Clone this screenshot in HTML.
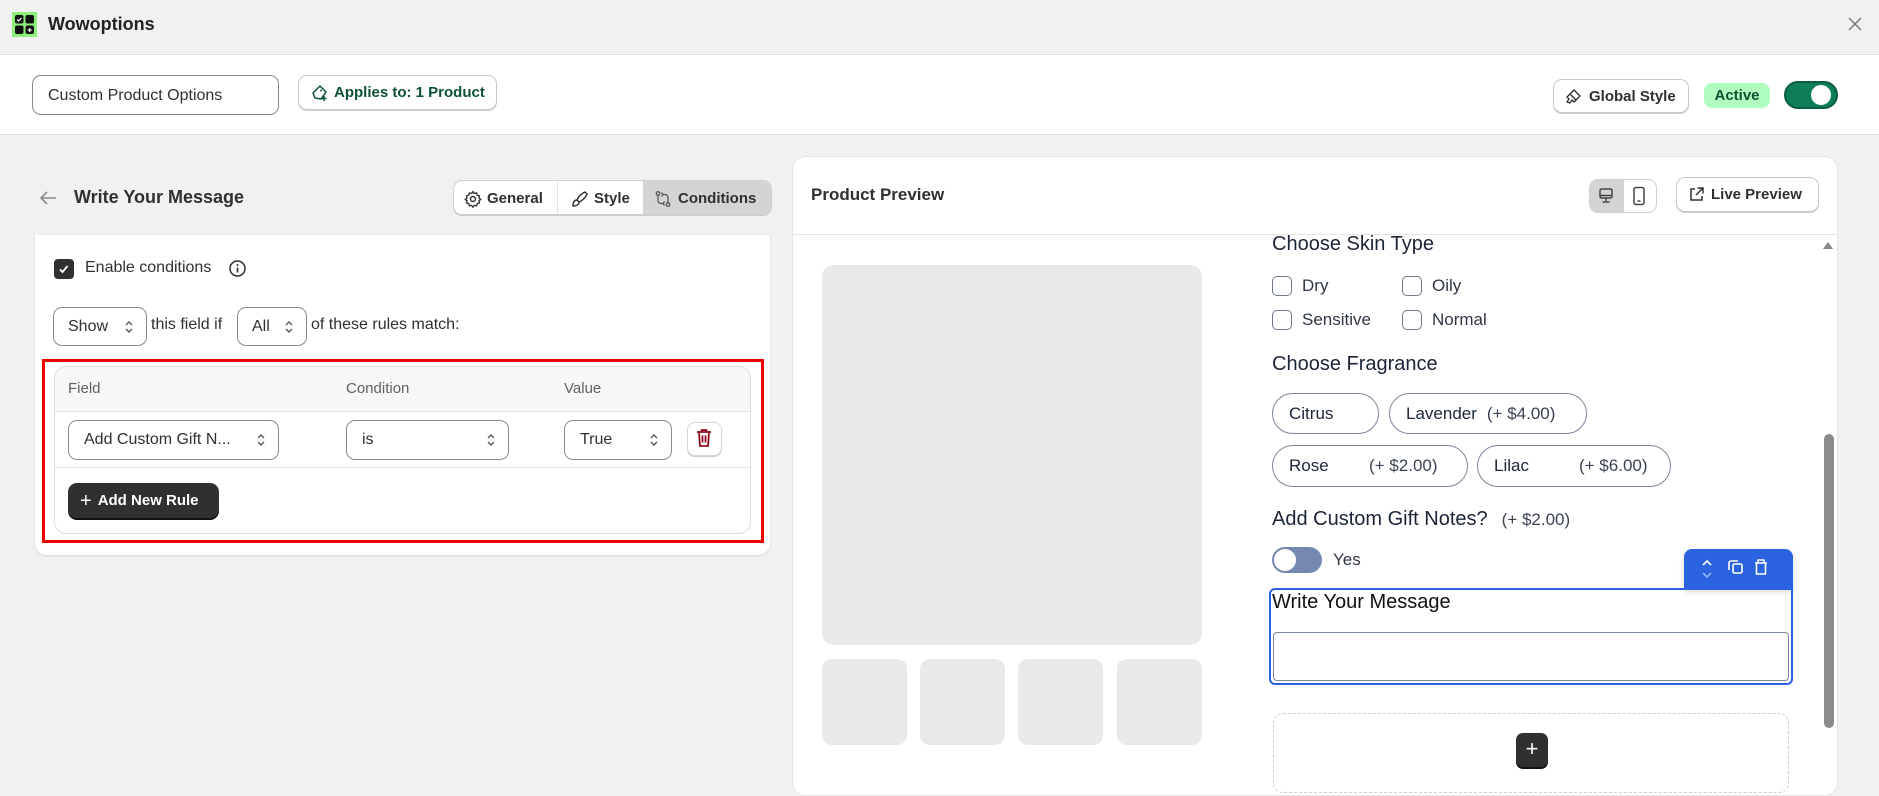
<!DOCTYPE html>
<html><head><meta charset="utf-8">
<style>
*{box-sizing:border-box;margin:0;padding:0}
body{width:1879px;height:777px;overflow:hidden;background:#f1f1f1;font-family:"Liberation Sans",sans-serif;color:#303030;position:relative}
.a{position:absolute}
.btn{position:absolute;background:#fff;border:1px solid #c9c9c9;border-radius:9px;box-shadow:0 1px 0 #d0d0d0;display:flex;align-items:center;font-size:15px}
.sel{position:absolute;background:#fff;border:1px solid #8a8a8a;border-radius:9px;display:flex;align-items:center;font-size:16px;color:#303030;padding-left:14px}
.chev{position:absolute;right:12px;top:50%;transform:translateY(-50%)}
.pill{position:absolute;border:1px solid #7b879b;border-radius:21px;display:flex;align-items:center;font-size:17px;color:#1b2537;padding-left:16px}
.cb{position:absolute;width:20px;height:20px;border:1.5px solid #6e7a8c;border-radius:5px;background:#fff}
.lbl{position:absolute;font-size:17px;color:#303744}
.thumb{position:absolute;top:659px;width:85px;height:86px;background:#e8e9eb;border-radius:10px}
</style></head><body>
<!-- top bar -->
<div class="a" style="left:12px;top:12px;width:25px;height:25px;background:#8ef07a"></div>
<svg class="a" style="left:15px;top:15px" width="19" height="19" viewBox="0 0 19 19"><rect x="0" y="0" width="8.5" height="8.5" rx="2" fill="#111"/><rect x="10.5" y="0" width="8.5" height="8.5" rx="2" fill="#111"/><rect x="0" y="10.5" width="8.5" height="8.5" rx="2" fill="#111"/><rect x="10.5" y="10.5" width="8.5" height="8.5" rx="2" fill="#111"/><path d="M2 4.5l1.5 1.5 3-3" stroke="#fff" stroke-width="1.2" fill="none"/><path d="M14.7 13v4M12.7 15h4" stroke="#fff" stroke-width="1.2"/></svg>
<div class="a" style="left:48px;top:14px;font-size:18px;font-weight:bold;color:#222">Wowoptions</div>
<svg class="a" style="left:1847px;top:16px" width="16" height="16" viewBox="0 0 16 16"><path d="M2 2l12 12M14 2L2 14" stroke="#777" stroke-width="1.5"/></svg>
<!-- header -->
<div class="a" style="left:0;top:54px;width:1879px;height:81px;background:#fff;border-top:1px solid #e0e0e0;border-bottom:1px solid #dadada"></div>
<div class="a" style="left:32px;top:75px;width:247px;height:40px;border:1px solid #8a8a8a;border-radius:9px;background:#fff;font-size:16px;padding:11px 0 0 15px;color:#303030">Custom Product Options</div>
<div class="btn" style="left:298px;top:75px;width:199px;height:35px;color:#0c5132;font-weight:bold;font-size:15px;padding-left:12px">
<svg width="18" height="18" viewBox="0 0 18 18" style="margin-right:5px"><path d="M9 2l6 6-5 7-6-1-2-5z" fill="none" stroke="#0c5132" stroke-width="1.5" stroke-linejoin="round"/><circle cx="10" cy="6.5" r="1" fill="#0c5132"/><path d="M13 12v5M10.5 14.5h5" stroke="#0c5132" stroke-width="1.5"/></svg>Applies to: 1 Product</div>
<div class="btn" style="left:1553px;top:79px;width:136px;height:34px;padding-left:11px;font-weight:bold;color:#303030">
<svg width="18" height="18" viewBox="0 0 18 18" style="margin-right:6px"><path d="M9 3l6 6-4 4-6-6z M5 7l-3 3 2 2-2 3 3 1 2-3 2 2 3-3" fill="none" stroke="#303030" stroke-width="1.4" stroke-linejoin="round"/></svg>Global Style</div>
<div class="a" style="left:1704px;top:83px;width:66px;height:25px;background:#affebf;border-radius:8px;color:#0c5132;font-size:15px;font-weight:bold;text-align:center;line-height:25px">Active</div>
<div class="a" style="left:1784px;top:81px;width:54px;height:28px;background:#0d7d5a;border-radius:14px;border:2px solid #0a5c42"></div>
<div class="a" style="left:1811px;top:85px;width:20px;height:20px;background:#fff;border-radius:50%"></div>
<!-- left title -->
<svg class="a" style="left:38px;top:190px" width="20" height="16" viewBox="0 0 20 16"><path d="M18 8H3M9 2L3 8l6 6" stroke="#8a8a8a" stroke-width="1.6" fill="none"/></svg>
<div class="a" style="left:74px;top:187px;font-size:18px;font-weight:bold;color:#303030">Write Your Message</div>
<div class="a" style="left:453px;top:180px;width:319px;height:35px;background:#fff;border:1px solid #cfcfcf;border-radius:9px;box-shadow:0 1px 0 #ccc;overflow:hidden;font-size:15px;font-weight:bold">
 <div class="a" style="left:0;top:0;width:104px;height:35px;border-right:1px solid #e3e3e3;display:flex;align-items:center;padding-left:10px">
  <svg width="18" height="18" viewBox="0 0 18 18" style="margin-right:5px"><circle cx="9" cy="9" r="2.5" fill="none" stroke="#303030" stroke-width="1.4"/><path d="M9 1.5l1.3 2 2.3-.6.6 2.3 2.3.6-.6 2.3 2 1.3-2 1.3.6 2.3-2.3.6-.6 2.3-2.3-.6-1.3 2-1.3-2-2.3.6-.6-2.3-2.3-.6.6-2.3-2-1.3 2-1.3-.6-2.3 2.3-.6.6-2.3 2.3.6z" fill="none" stroke="#303030" stroke-width="1.3" stroke-linejoin="round"/></svg>General</div>
 <div class="a" style="left:104px;top:0;width:85px;height:35px;display:flex;align-items:center;padding-left:12px">
  <svg width="18" height="18" viewBox="0 0 18 18" style="margin-right:6px"><path d="M15 2c-3 1-7 5-8 8l2 2c3-1 7-5 8-8z M7 10c-2 0-4 1-4 6 3 0 6-1 6-4" fill="none" stroke="#303030" stroke-width="1.4" stroke-linejoin="round"/></svg>Style</div>
 <div class="a" style="left:189px;top:0;width:130px;height:35px;background:#d4d4d4;display:flex;align-items:center;padding-left:11px">
  <svg width="18" height="18" viewBox="0 0 18 18" style="margin-right:6px"><circle cx="4" cy="3.5" r="1.8" fill="none" stroke="#555" stroke-width="1.3"/><circle cx="14" cy="14.5" r="1.8" fill="none" stroke="#555" stroke-width="1.3"/><path d="M4 5.5v5a3 3 0 003 3h2M14 12.5v-5a3 3 0 00-3-3H9M10.5 11.5l-1.5 2 1.5 2M7.5 2.5l1.5 2-1.5 2" fill="none" stroke="#555" stroke-width="1.3"/></svg>Conditions</div>
</div>
<!-- left card -->
<div class="a" style="left:35px;top:235px;width:735px;height:320px;background:#fff;border-radius:0 0 12px 12px;box-shadow:0 1px 2px #d6d6d6"></div>
<div class="a" style="left:54px;top:259px;width:20px;height:20px;background:#303030;border-radius:4px"></div>
<svg class="a" style="left:57px;top:262px" width="14" height="14" viewBox="0 0 14 14"><path d="M3 7.5l2.5 2.5 5-6" stroke="#fff" stroke-width="1.8" fill="none"/></svg>
<div class="a" style="left:85px;top:259px;font-size:16px;color:#303030">Enable conditions</div>
<svg class="a" style="left:228px;top:259px" width="19" height="19" viewBox="0 0 19 19"><circle cx="9.5" cy="9.5" r="7.5" fill="none" stroke="#303030" stroke-width="1.5"/><path d="M9.5 8.5v5" stroke="#303030" stroke-width="1.6"/><circle cx="9.5" cy="6" r="1" fill="#303030"/></svg>
<div class="sel" style="left:53px;top:307px;width:94px;height:39px">Show<svg class="chev" width="10" height="16" viewBox="0 0 10 16"><path d="M2 6l3-3 3 3M2 10l3 3 3-3" stroke="#555" stroke-width="1.4" fill="none"/></svg></div>
<div class="a" style="left:151px;top:316px;font-size:16px">this field if</div>
<div class="sel" style="left:237px;top:307px;width:70px;height:39px">All<svg class="chev" width="10" height="16" viewBox="0 0 10 16"><path d="M2 6l3-3 3 3M2 10l3 3 3-3" stroke="#555" stroke-width="1.4" fill="none"/></svg></div>
<div class="a" style="left:311px;top:316px;font-size:16px">of these rules match:</div>
<!-- red box -->
<div class="a" style="left:42px;top:359px;width:722px;height:184px;border:3px solid #ee0000"></div>
<div class="a" style="left:54px;top:366px;width:697px;height:168px;border:1px solid #dcdcdc;border-radius:12px;overflow:hidden;background:#fff">
 <div class="a" style="left:0;top:0;width:697px;height:45px;background:#f7f7f7;border-bottom:1px solid #e3e3e3"></div>
 <div class="a" style="left:0;top:100px;width:697px;height:1px;background:#e3e3e3"></div>
</div>
<div class="a" style="left:68px;top:380px;font-size:15px;color:#616161">Field</div>
<div class="a" style="left:346px;top:380px;font-size:15px;color:#616161">Condition</div>
<div class="a" style="left:564px;top:380px;font-size:15px;color:#616161">Value</div>
<div class="sel" style="left:68px;top:420px;width:211px;height:40px;padding-left:15px">Add Custom Gift N...<svg class="chev" width="10" height="16" viewBox="0 0 10 16"><path d="M2 6l3-3 3 3M2 10l3 3 3-3" stroke="#555" stroke-width="1.4" fill="none"/></svg></div>
<div class="sel" style="left:346px;top:420px;width:163px;height:40px;padding-left:15px">is<svg class="chev" width="10" height="16" viewBox="0 0 10 16"><path d="M2 6l3-3 3 3M2 10l3 3 3-3" stroke="#555" stroke-width="1.4" fill="none"/></svg></div>
<div class="sel" style="left:564px;top:420px;width:108px;height:40px;padding-left:15px">True<svg class="chev" width="10" height="16" viewBox="0 0 10 16"><path d="M2 6l3-3 3 3M2 10l3 3 3-3" stroke="#555" stroke-width="1.4" fill="none"/></svg></div>
<div class="a" style="left:687px;top:422px;width:35px;height:34px;border:1px solid #d6d6d6;border-radius:8px;box-shadow:0 1px 0 #ccc;background:#fff"></div>
<svg class="a" style="left:695px;top:428px" width="18" height="20" viewBox="0 0 18 20"><path d="M2 4h14M6.5 4V2h5v2M4 4l1 14h8l1-14M7.5 7.5v7M10.5 7.5v7" fill="none" stroke="#8e0b21" stroke-width="1.8" stroke-linejoin="round"/></svg>
<div class="a" style="left:68px;top:483px;width:151px;height:35px;background:#303030;border-radius:9px;box-shadow:0 2px 0 #111;color:#fff;font-size:15px;font-weight:bold;display:flex;align-items:center;padding-left:12px"><span style="font-size:20px;font-weight:normal;margin-right:6px;line-height:1">+</span>Add New Rule</div>
<!-- right card -->
<div class="a" style="left:792px;top:156px;width:1046px;height:640px;background:#fff;border-radius:14px;border:1px solid #e6e6e6"></div>
<div class="a" style="left:792px;top:234px;width:1046px;height:1px;background:#e6e6e6"></div>
<div class="a" style="left:811px;top:185px;font-size:17px;font-weight:bold;color:#303030">Product Preview</div>
<div class="a" style="left:1589px;top:179px;width:68px;height:34px;border:1px solid #cfcfcf;border-radius:9px;overflow:hidden;background:#fff">
 <div class="a" style="left:0;top:0;width:34px;height:34px;background:#d4d4d4"></div>
</div>
<svg class="a" style="left:1598px;top:187px" width="16" height="18" viewBox="0 0 16 18"><rect x="2" y="2" width="12" height="9" rx="1.5" fill="none" stroke="#444" stroke-width="1.5"/><path d="M2 8.5h12M8 11v3M4.5 15h7" stroke="#444" stroke-width="1.5"/></svg>
<svg class="a" style="left:1632px;top:186px" width="14" height="20" viewBox="0 0 14 20"><rect x="2" y="1.5" width="10" height="17" rx="2" fill="none" stroke="#444" stroke-width="1.5"/><path d="M5.5 15h3" stroke="#444" stroke-width="1.5"/></svg>
<div class="btn" style="left:1676px;top:177px;width:143px;height:35px;font-weight:bold;padding-left:11px;color:#303030"><svg width="17" height="17" viewBox="0 0 17 17" style="margin-right:6px"><path d="M7 3H3v11h11v-4M9.5 2h5.5v5.5M15 2L8 9" fill="none" stroke="#303030" stroke-width="1.5"/></svg>Live Preview</div>
<!-- images -->
<div class="a" style="left:822px;top:265px;width:380px;height:380px;background:#e8e9eb;border-radius:12px"></div>
<div class="thumb" style="left:822px"></div><div class="thumb" style="left:920px"></div><div class="thumb" style="left:1018px"></div><div class="thumb" style="left:1117px"></div>
<!-- form -->
<div class="a" style="left:1272px;top:233px;font-size:20px;color:#1b2537">Choose Skin Type</div>
<div class="cb" style="left:1272px;top:276px"></div><div class="lbl" style="left:1302px;top:276px">Dry</div>
<div class="cb" style="left:1402px;top:276px"></div><div class="lbl" style="left:1432px;top:276px">Oily</div>
<div class="cb" style="left:1272px;top:310px"></div><div class="lbl" style="left:1302px;top:310px">Sensitive</div>
<div class="cb" style="left:1402px;top:310px"></div><div class="lbl" style="left:1432px;top:310px">Normal</div>
<div class="a" style="left:1272px;top:353px;font-size:20px;color:#1b2537">Choose Fragrance</div>
<div class="pill" style="left:1272px;top:393px;width:107px;height:41px">Citrus</div>
<div class="pill" style="left:1389px;top:393px;width:198px;height:41px">Lavender<span style="margin-left:10px;color:#3a4352">(+ $4.00)</span></div>
<div class="pill" style="left:1272px;top:445px;width:196px;height:42px">Rose<span style="position:absolute;left:96px;color:#3a4352">(+ $2.00)</span></div>
<div class="pill" style="left:1477px;top:445px;width:194px;height:42px">Lilac<span style="position:absolute;left:101px;color:#3a4352">(+ $6.00)</span></div>
<div class="a" style="left:1272px;top:508px;font-size:20px;color:#1b2537">Add Custom Gift Notes?<span style="font-size:17px;color:#3a4352;margin-left:14px">(+ $2.00)</span></div>
<div class="a" style="left:1272px;top:547px;width:50px;height:26px;background:#7589b0;border-radius:13px"></div>
<div class="a" style="left:1274px;top:549px;width:22px;height:22px;background:#fff;border-radius:50%"></div>
<div class="lbl" style="left:1333px;top:550px">Yes</div>
<div class="a" style="left:1684px;top:549px;width:109px;height:41px;background:#2a62e0;border-radius:8px 8px 0 0;box-shadow:0 2px 6px rgba(0,0,0,.15)"></div>
<svg class="a" style="left:1694px;top:553px" width="95" height="32" viewBox="0 0 95 32"><path d="M9 12l4-4 4 4" stroke="#fff" stroke-width="1.6" fill="none"/><path d="M9 20l4 4 4-4" stroke="#8fb0f5" stroke-width="1.6" fill="none"/><rect x="39" y="11" width="9" height="9" rx="1.5" fill="none" stroke="#fff" stroke-width="1.6"/><path d="M35 17v-7a2 2 0 012-2h7" fill="none" stroke="#fff" stroke-width="1.6"/><path d="M61 10h12M64 10V7h6v3M62.5 10v11h9V10" fill="none" stroke="#fff" stroke-width="1.6" stroke-linejoin="round"/></svg>
<div class="a" style="left:1269px;top:588px;width:524px;height:97px;border:2px solid #2a62e0;border-radius:0 0 6px 6px;border-top-left-radius:6px"></div>
<div class="a" style="left:1272px;top:591px;font-size:20px;color:#111">Write Your Message</div>
<div class="a" style="left:1273px;top:632px;width:516px;height:49px;border:1px solid #7b879b;border-radius:4px"></div>
<div class="a" style="left:1273px;top:713px;width:516px;height:80px;border:1px dashed #d0d0d0;border-radius:10px"></div>
<div class="a" style="left:1516px;top:733px;width:32px;height:34px;background:#303030;border-radius:7px;box-shadow:0 2px 0 #111;color:#fff;font-size:22px;text-align:center;line-height:32px">+</div>
<!-- scrollbar -->
<svg class="a" style="left:1822px;top:240px" width="12" height="10" viewBox="0 0 12 10"><path d="M1 9L6 2l5 7z" fill="#888"/></svg>
<div class="a" style="left:1824px;top:434px;width:10px;height:294px;background:#8b8b8b;border-radius:5px"></div>
</body></html>
